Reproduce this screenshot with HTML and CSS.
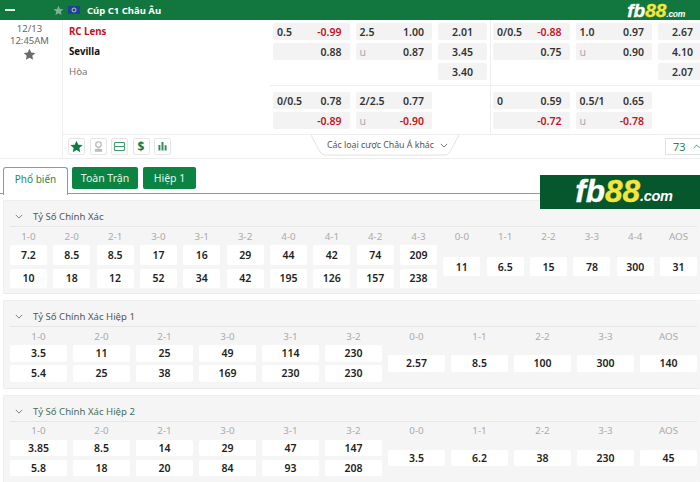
FILE: index.html
```html
<!DOCTYPE html>
<html lang="vi">
<head>
<meta charset="utf-8">
<title>Cúp C1 Châu Âu</title>
<link rel="stylesheet" href="styles.css">
</head>
<body>
<header class="league">
  <span class="collapse"></span>
  <svg class="league-star" viewBox="0 0 24 24"><path d="M12 1.500l3.200 7 7.600.8-5.700 5.100 1.600 7.500L12 18.100 5.300 21.900l1.600-7.500L1.200 9.300l7.600-.8z"/></svg>
  <svg class="flag" viewBox="0 0 12 8"><rect width="12" height="8" fill="#1f3f9c"/><circle cx="6" cy="4" r="2" fill="none" stroke="#c9cf8a" stroke-width="1"/></svg>
  <span class="league-name">Cúp C1 Châu Âu</span>
  <span class="brand brand-small"><b>fb</b><i>88</i><small>.com</small></span>
</header>

<section class="match">
  <div class="time">
    <span>12/13</span>
    <span>12:45AM</span>
    <svg class="time-star" viewBox="0 0 24 24"><path d="M12 1.500l3.200 7 7.600.8-5.700 5.100 1.600 7.500L12 18.100 5.300 21.900l1.600-7.500L1.200 9.300l7.600-.8z"/></svg>
  </div>
  <div class="match-main">
    <div class="match-top">
      <div class="teams">
        <div class="team home">RC Lens</div>
        <div class="team away">Sevilla</div>
        <div class="team draw">Hòa</div>
      </div>
      <div class="odds-half">
        <div class="odds-block first">
          <div class="odd"><span>0.5</span><b class="neg">-0.99</b></div>
          <div class="odd"><span>2.5</span><b>1.00</b></div>
          <div class="odd solo"><b>2.01</b></div>
          <div class="odd"><span></span><b>0.88</b></div>
          <div class="odd"><span class="u">u</span><b>0.87</b></div>
          <div class="odd solo"><b>3.45</b></div>
          <div class="blank"></div>
          <div class="blank"></div>
          <div class="odd solo"><b>3.40</b></div>
        </div>
        <div class="odds-block second">
          <div class="odd"><span>0/0.5</span><b>0.78</b></div>
          <div class="odd"><span>2/2.5</span><b>0.77</b></div>
          <div class="blank"></div>
          <div class="odd"><span></span><b class="neg">-0.89</b></div>
          <div class="odd"><span class="u">u</span><b class="neg">-0.90</b></div>
          <div class="blank"></div>
        </div>
      </div>
      <div class="odds-half last">
        <div class="odds-block first">
          <div class="odd"><span>0/0.5</span><b class="neg">-0.88</b></div>
          <div class="odd"><span>1.0</span><b>0.97</b></div>
          <div class="odd solo"><b>2.67</b></div>
          <div class="odd"><span></span><b>0.75</b></div>
          <div class="odd"><span class="u">u</span><b>0.90</b></div>
          <div class="odd solo"><b>4.10</b></div>
          <div class="blank"></div>
          <div class="blank"></div>
          <div class="odd solo"><b>2.07</b></div>
        </div>
        <div class="odds-block second">
          <div class="odd"><span>0</span><b>0.59</b></div>
          <div class="odd"><span>0.5/1</span><b>0.65</b></div>
          <div class="blank"></div>
          <div class="odd"><span></span><b class="neg">-0.72</b></div>
          <div class="odd"><span class="u">u</span><b class="neg">-0.78</b></div>
          <div class="blank"></div>
        </div>
      </div>
    </div>
    <div class="toolbar">
      <div class="tools">
        <span class="tool"><svg viewBox="0 0 16 16"><path fill="#0b7f43" d="M8 .8l2.200 4.900 5.300.6-4 3.500 1.100 5.200L8 12.300 3.400 15l1.100-5.200-4-3.500 5.300-.6z"/></svg></span>
        <span class="tool"><svg viewBox="0 0 16 16"><circle cx="8" cy="5.500" r="3.400" fill="none" stroke="#b0b0b0" stroke-width="1.400"/><path fill="#bbb" d="M6.500 8.500h3v2h-3zM3.500 11h9v3.500h-9z"/></svg></span>
        <span class="tool"><svg viewBox="0 0 16 16"><path fill="none" stroke="#3d9a6b" stroke-width="1.300" d="M2.500 3h11l.8 2v2l-1 1 1 1v2l-.8 2h-11l-.8-2V9l1-1-1-1V5zM3 8h10"/></svg></span>
        <span class="tool dollar">$</span>
        <span class="tool"><svg viewBox="0 0 16 16"><path fill="#2b8f5c" d="M3 6h2.400v7H3zM6.800 2.500h2.400V13H6.800zM10.600 6.500H13V13h-2.400z"/></svg></span>
      </div>
      <div class="more">
        <svg class="more-shape" viewBox="0 0 148 23" preserveAspectRatio="none"><path fill="none" stroke="#e2e2e2" d="M0 0l9 17q2 3 5 3h120q3 0 5-3l9-17"/></svg>
        <span>Các loại cược Châu Á khác</span>
        <svg class="more-chevron" viewBox="0 0 10 6"><path fill="none" stroke="#555" stroke-width="1" d="M1 1l4 4 4-4"/></svg>
      </div>
      <div class="count"><span>73</span><svg viewBox="0 0 10 6"><path fill="none" stroke="#1d8a54" stroke-width="1.100" d="M1 5l4-4 4 4"/></svg></div>
    </div>
  </div>
</section>

<nav class="tabs">
  <span class="tab active">Phổ biến</span>
  <span class="tab">Toàn Trận</span>
  <span class="tab">Hiệp 1</span>
</nav>
<div class="promo brand"><b>fb</b><i>88</i><small>.com</small></div>

<section class="market wide">
  <h3 class="market-title"><svg viewBox="0 0 10 6"><path fill="none" stroke="#666" d="M1 1l4 4 4-4"/></svg>Tỷ Số Chính Xác</h3>
  <div class="scores s16">
    <div class="col"><em>1-0</em><div class="stack"><b>7.2</b><b>10</b></div></div>
    <div class="col"><em>2-0</em><div class="stack"><b>8.5</b><b>18</b></div></div>
    <div class="col"><em>2-1</em><div class="stack"><b>8.5</b><b>12</b></div></div>
    <div class="col"><em>3-0</em><div class="stack"><b>17</b><b>52</b></div></div>
    <div class="col"><em>3-1</em><div class="stack"><b>16</b><b>34</b></div></div>
    <div class="col"><em>3-2</em><div class="stack"><b>29</b><b>42</b></div></div>
    <div class="col"><em>4-0</em><div class="stack"><b>44</b><b>195</b></div></div>
    <div class="col"><em>4-1</em><div class="stack"><b>42</b><b>126</b></div></div>
    <div class="col"><em>4-2</em><div class="stack"><b>74</b><b>157</b></div></div>
    <div class="col"><em>4-3</em><div class="stack"><b>209</b><b>238</b></div></div>
    <div class="col"><em>0-0</em><div class="stack"><b>11</b></div></div>
    <div class="col"><em>1-1</em><div class="stack"><b>6.5</b></div></div>
    <div class="col"><em>2-2</em><div class="stack"><b>15</b></div></div>
    <div class="col"><em>3-3</em><div class="stack"><b>78</b></div></div>
    <div class="col"><em>4-4</em><div class="stack"><b>300</b></div></div>
    <div class="col"><em>AOS</em><div class="stack"><b>31</b></div></div>
  </div>
</section>

<section class="market">
  <h3 class="market-title"><svg viewBox="0 0 10 6"><path fill="none" stroke="#666" d="M1 1l4 4 4-4"/></svg>Tỷ Số Chính Xác Hiệp 1</h3>
  <div class="scores s11">
    <div class="col"><em>1-0</em><div class="stack"><b>3.5</b><b>5.4</b></div></div>
    <div class="col"><em>2-0</em><div class="stack"><b>11</b><b>25</b></div></div>
    <div class="col"><em>2-1</em><div class="stack"><b>25</b><b>38</b></div></div>
    <div class="col"><em>3-0</em><div class="stack"><b>49</b><b>169</b></div></div>
    <div class="col"><em>3-1</em><div class="stack"><b>114</b><b>230</b></div></div>
    <div class="col"><em>3-2</em><div class="stack"><b>230</b><b>230</b></div></div>
    <div class="col"><em>0-0</em><div class="stack"><b>2.57</b></div></div>
    <div class="col"><em>1-1</em><div class="stack"><b>8.5</b></div></div>
    <div class="col"><em>2-2</em><div class="stack"><b>100</b></div></div>
    <div class="col"><em>3-3</em><div class="stack"><b>300</b></div></div>
    <div class="col"><em>AOS</em><div class="stack"><b>140</b></div></div>
  </div>
</section>

<section class="market">
  <h3 class="market-title tint"><svg viewBox="0 0 10 6"><path fill="none" stroke="#666" d="M1 1l4 4 4-4"/></svg>Tỷ Số Chính Xác Hiệp 2</h3>
  <div class="scores s11">
    <div class="col"><em>1-0</em><div class="stack"><b>3.85</b><b>5.8</b></div></div>
    <div class="col"><em>2-0</em><div class="stack"><b>8.5</b><b>18</b></div></div>
    <div class="col"><em>2-1</em><div class="stack"><b>14</b><b>20</b></div></div>
    <div class="col"><em>3-0</em><div class="stack"><b>29</b><b>84</b></div></div>
    <div class="col"><em>3-1</em><div class="stack"><b>47</b><b>93</b></div></div>
    <div class="col"><em>3-2</em><div class="stack"><b>147</b><b>208</b></div></div>
    <div class="col"><em>0-0</em><div class="stack"><b>3.5</b></div></div>
    <div class="col"><em>1-1</em><div class="stack"><b>6.2</b></div></div>
    <div class="col"><em>2-2</em><div class="stack"><b>38</b></div></div>
    <div class="col"><em>3-3</em><div class="stack"><b>230</b></div></div>
    <div class="col"><em>AOS</em><div class="stack"><b>45</b></div></div>
  </div>
</section>
</body>
</html>
```
FILE: styles.css
```css
* { box-sizing: border-box; }
html, body { height: 482px; overflow: hidden; }
body {
  margin: 0;
  position: relative;
  background: #fff;
  font-family: "Noto Sans", "Open Sans", sans-serif;
  font-size: 10.5px;
  color: #222;
}

/* League header */
.league {
  height: 20px;
  background: #11773f;
  display: flex;
  align-items: center;
  color: #fff;
}
.collapse { width: 10px; height: 2px; background: #e8f2ec; margin-left: 5px; }
.league-star { width: 11px; height: 11px; fill: #7fb095; margin-left: 38px; }
.flag { width: 12px; height: 8px; margin-left: 4px; }
.league-name { margin-left: 7px; font-weight: 700; font-size: 9.5px; }
.brand { font-family: "Liberation Sans", sans-serif; font-style: italic; white-space: nowrap; line-height: 1; }
.brand b { color: #fff; font-weight: 700; }
.brand i { color: #f5e63c; font-weight: 700; }
.brand small { color: #fff; font-weight: 700; letter-spacing: -.3px; }
.brand-small { margin-left: auto; margin-right: 15px; font-size: 19px; }
.brand-small small { font-size: 8.5px; }

/* Match */
.match {
  display: grid;
  grid-template-columns: 62px 1fr;
  height: 139px;
  border-bottom: 1px solid #eee;
}
.time {
  display: flex;
  flex-direction: column;
  align-items: center;
  padding: 3px 3px 0 0;
  line-height: 12px;
  color: #666;
  font-size: 9.5px;
}
.time-star { width: 13px; height: 13px; fill: #6b6b6b; margin-top: 1px; }
.match-main { border-left: 1px solid #eee; min-width: 0; display: flex; flex-direction: column; }
.match-top {
  height: 115px;
  display: grid;
  grid-template-columns: 207px 221px 210px;
  border-bottom: 1px solid #eee;
}
.teams { padding: 3px 0 0 6px; font-size: 9.7px; }
.team { height: 17px; line-height: 17px; margin-bottom: 3px; font-weight: 700; color: #111; }
.team.home { color: #c4121f; }
.team.draw { font-weight: 400; color: #777; }
.odds-half { border-right: 1px solid #eee; padding-left: 3px; display: flex; flex-direction: column; }
.odds-half.last { border-right: 0; padding-left: 2px; }
.odds-block {
  display: grid;
  grid-template-columns: 76.5px 76.5px 49px;
  grid-auto-rows: 17px;
  gap: 3px 6px;
  padding-top: 3px;
}
.odds-block.first { height: 66px; margin-left: -3px; padding-left: 3px; border-bottom: 1px solid #eee; }
.odds-half.last .odds-block.first { margin-left: -2px; padding-left: 2px; }
.odds-block.second { padding-top: 6px; }
.odd {
  background: #f3f3f3;
  border-radius: 2px;
  display: flex;
  align-items: center;
  justify-content: space-between;
  padding: 0 8px 0 4px;
  color: #333;
  font-weight: 600;
}
.odd b { font-weight: 600; }
.odd.solo { justify-content: center; padding: 0; }
.odd .neg { color: #c4121f; }
.odd .u { color: #aaa; font-weight: 400; }

/* Toolbar */
.toolbar { flex: 1; display: flex; align-items: center; padding-left: 5px; position: relative; }
.tools { display: flex; gap: 4.5px; }
.tool {
  width: 17px;
  height: 17px;
  border: 1px solid #e6e6e6;
  border-radius: 2px;
  display: flex;
  align-items: center;
  justify-content: center;
  background: #fff;
}
.tool svg { width: 13px; height: 13px; }
.tool.dollar { color: #0b7f43; font-weight: 700; font-size: 12px; line-height: 1; }
.more {
  position: relative;
  width: 148px;
  height: 23px;
  margin-left: 140px;
  display: flex;
  align-items: center;
  justify-content: center;
  gap: 6px;
  color: #555;
  font-size: 8.8px;
  padding: 0 0 3px 5px;
}
.more-shape { position: absolute; left: 0; top: 0; width: 100%; height: 100%; }
.more-chevron { width: 8px; height: 5px; }
.count {
  margin-left: auto;
  width: 36px;
  height: 17px;
  margin-right: -1px;
  border: 1px solid #e2e2e2;
  display: flex;
  align-items: center;
  gap: 7px;
  padding-left: 7px;
  color: #1d8a54;
  font-size: 11px;
}
.count svg { width: 8px; height: 5px; }

/* Tabs */
.tabs {
  margin-top: 8px;
  height: 27px;
  padding-left: 3px;
  display: flex;
  align-items: flex-start;
  gap: 4px;
  border-bottom: 1px solid #5fb48c;
}
.tab {
  height: 22px;
  padding: 0 12px;
  background: #0b8443;
  color: #e6f4ec;
  border-radius: 2px;
  display: flex;
  align-items: center;
  font-size: 10.5px;
}
.tab:nth-child(2) { width: 66px; justify-content: center; padding: 0; }
.tab:nth-child(3) { width: 53px; justify-content: center; padding: 0; margin-left: 1px; }
.tab.active {
  width: 65px;
  justify-content: center;
  padding: 0 0 5px;
  background: #fff;
  color: #1d8a54;
  border: 1px solid #5fb48c;
  border-bottom: 0;
  border-radius: 3px 3px 0 0;
  position: relative;
  z-index: 1;
  margin-bottom: -1px;
  height: 28px;
  font-size: 10px;
}
.promo {
  position: absolute;
  left: 540px;
  top: 175px;
  width: 160px;
  height: 34px;
  background: #07572c;
  display: flex;
  align-items: center;
  justify-content: center;
  font-size: 31.5px;
  padding-left: 8px;
}
.promo small { font-size: 14.5px; align-self: flex-end; padding-bottom: 6px; }
.promo b, .promo i, .brand-small b, .brand-small i { -webkit-text-stroke: .4px currentColor; }

/* Markets */
.market {
  margin: 6px 0 0 3px;
  background: #f5f5f5;
  border-top: 1px solid #eee;
  border-bottom: 1px solid #e9e9e9;
  border-left: 1px solid #eee;
  padding: 0 3px 5px 6px;
  border-radius: 2px;
}
.market-title {
  margin: 0;
  height: 26px;
  border-bottom: 1px solid #e6e6e6;
  display: flex;
  align-items: center;
  gap: 10px;
  padding: 6px 0 0 5px;
  font-weight: 400;
  font-size: 9.6px;
  color: #555;
}
.market-title svg { width: 8px; height: 5px; }
.market-title.tint { color: #44705c; }
.scores { display: grid; }
.s16 { grid-template-columns: repeat(16, 1fr); column-gap: 6.5px; }
.s11 { grid-template-columns: repeat(11, 1fr); column-gap: 6px; }
.col { display: flex; flex-direction: column; min-width: 0; }
.col em {
  height: 18px;
  display: flex;
  align-items: center;
  justify-content: center;
  font-style: normal;
  color: #aaa;
  font-size: 9.8px;
}
.stack { flex: 1; display: flex; flex-direction: column; justify-content: center; gap: 3.5px; }
.stack b {
  height: 16.5px;
  background: #fff;
  border-radius: 2px;
  display: flex;
  align-items: center;
  justify-content: center;
  font-weight: 600;
  color: #222;
}
.market:not(.wide) { padding-bottom: 6px; }
.wide .stack { gap: 4px; }
.wide .stack b { height: 19.5px; }
```
